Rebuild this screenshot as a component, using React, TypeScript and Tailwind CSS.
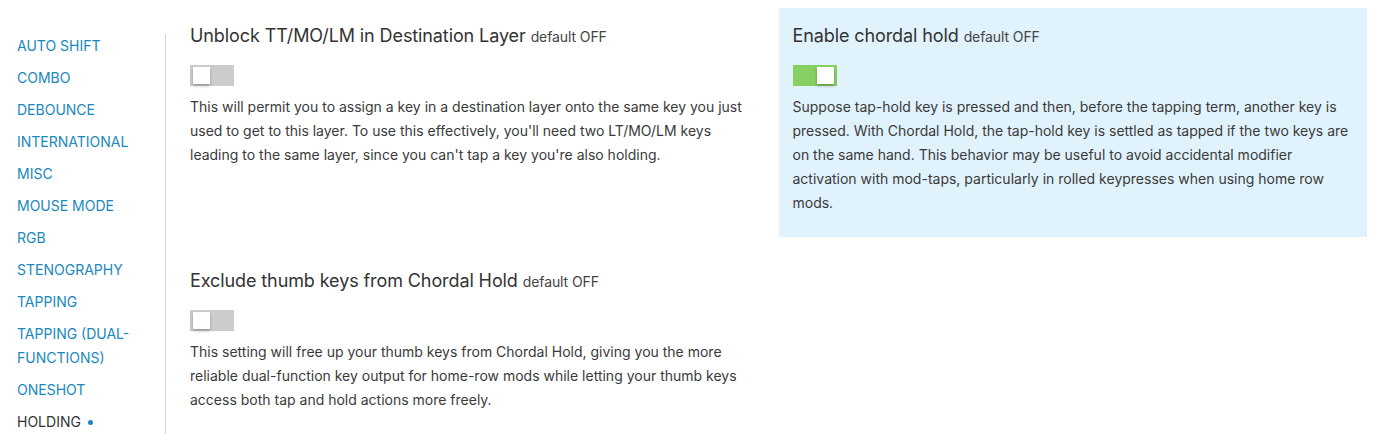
const sections = [
  "AUTO SHIFT",
  "COMBO",
  "DEBOUNCE",
  "INTERNATIONAL",
  "MISC",
  "MOUSE MODE",
  "RGB",
  "STENOGRAPHY",
  "TAPPING",
  "TAPPING (DUAL-FUNCTIONS)",
  "ONESHOT",
];

const settings = [
  {
    title: "Unblock TT/MO/LM in Destination Layer",
    on: false,
    active: false,
    description:
      "This will permit you to assign a key in a destination layer onto the same key you just used to get to this layer. To use this effectively, you'll need two LT/MO/LM keys leading to the same layer, since you can't tap a key you're also holding.",
  },
  {
    title: "Enable chordal hold",
    on: true,
    active: true,
    description:
      "Suppose tap-hold key is pressed and then, before the tapping term, another key is pressed. With Chordal Hold, the tap-hold key is settled as tapped if the two keys are on the same hand. This behavior may be useful to avoid accidental modifier activation with mod-taps, particularly in rolled keypresses when using home row mods.",
  },
  {
    title: "Exclude thumb keys from Chordal Hold",
    on: false,
    active: false,
    description:
      "This setting will free up your thumb keys from Chordal Hold, giving you the more reliable dual-function key output for home-row mods while letting your thumb keys access both tap and hold actions more freely.",
  },
];

const Toggle = ({ on }: { on: boolean }) => (
  <div
    className={
      on
        ? "flex h-[21px] w-[44px] items-center justify-end bg-[#86cf62] px-[3px]"
        : "flex h-[21px] w-[44px] items-center justify-start bg-[#cccccc] px-[3px]"
    }
  >
    <div className="h-[17px] w-[17px] bg-white shadow-[0_2px_3px_rgba(0,0,0,0.25)]" />
  </div>
);

const App = () => {
  return (
    <div
      className="flex h-[448px] w-[1377px] overflow-hidden bg-white text-[#333]"
      style={{ fontFamily: "Inter, 'Noto Sans', sans-serif" }}
    >
      {/* Sidebar */}
      <nav className="w-[166px] shrink-0 pt-[34px] pl-[17px]">
        <ul className="flex h-[400px] flex-col gap-2 border-r border-[#d9d9d9] pr-4">
          {sections.map((s) => (
            <li key={s} className="text-[14px] leading-6 text-[#1a88bd]">
              {s}
            </li>
          ))}
          <li className="flex items-center gap-[7px] text-[14px] leading-6 text-[#333]">
            HOLDING
            <span className="h-[5px] w-[5px] rounded-full bg-[#1a88bd]" />
          </li>
        </ul>
      </nav>

      {/* Settings */}
      <main className="grid flex-1 grid-cols-2 content-start gap-x-[14px] gap-y-4 pt-2 pl-[10px] pr-[10px]">
        {settings.map((s) => (
          <div
            key={s.title}
            className={
              s.active
                ? "flex min-h-[229px] flex-col bg-[#e0f2fc] px-[14px] pt-[14px]"
                : "flex flex-col px-[14px] pt-[14px]"
            }
          >
            <h3 className="text-[18px] leading-[27px] tracking-[-0.1px] text-[#333]">
              {s.title}{" "}
              <span className="text-[14px] text-[#444]">default OFF</span>
            </h3>
            <div className="mt-[15px] mb-[9px]">
              <Toggle on={s.on} />
            </div>
            <p className="text-[14px] leading-6 text-[#3a3a3a]">{s.description}</p>
          </div>
        ))}
      </main>
    </div>
  );
};

export default App;
